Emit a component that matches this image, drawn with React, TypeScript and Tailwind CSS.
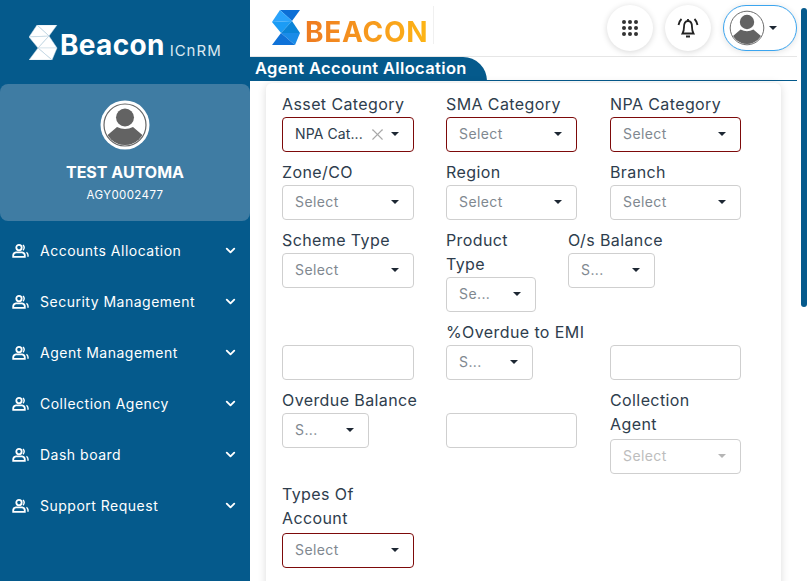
import { ChevronDown, X } from 'lucide-react';

const menu = ['Accounts Allocation', 'Security Management', 'Agent Management', 'Collection Agency', 'Dash board', 'Support Request'];

const Avatar = ({ size, id }: { size: number; id: string }) => (
  <svg width={size} height={size} viewBox="0 0 50 50">
    <circle cx="25" cy="25" r="24.5" fill="#fff" />
    <circle cx="25" cy="25" r="21" fill="#fff" stroke="#666" strokeWidth="1.2" />
    <clipPath id={id}>
      <circle cx="25" cy="25" r="20" />
    </clipPath>
    <g clipPath={`url(#${id})`} fill="#636363">
      <circle cx="25" cy="17.5" r="9" />
      <path d="M4 38 L17 27 Q25 31 33 27 L46 38 L46 50 L4 50 Z" />
    </g>
  </svg>
);

const PeopleIcon = () => (
  <svg width="17" height="14" viewBox="0 0 17 14" fill="none" stroke="#fff" strokeWidth="1.8">
    <circle cx="7" cy="3.6" r="2.7" />
    <path d="M1.2 12.8 V11.4 Q1.2 8.8 4 8.4 H10 Q12.8 8.8 12.8 11.4 V12.8 Z" />
    <path d="M11 1 Q13.4 3.6 11 6.2" strokeWidth="1.4" />
    <path d="M16 12.8 V11 Q15.8 9 14.4 8.4" strokeWidth="1.4" />
  </svg>
);

const LogoMark = ({ white }: { white?: boolean }) => {
  const c = white
    ? ['#fff', '#fff', '#fff', '#fff', '#fff', '#fff']
    : ['#0c6fd6', '#2aa3fb', '#1b9cf5', '#0a84d8', '#1a8ce8', '#0f72d8'];
  const s = white ? '#c3d6e3' : 'none';
  return (
    <svg width="29" height="35" viewBox="0 0 29 35">
      <g stroke={s} strokeWidth="0.5">
        <polygon points="8,0 28,0 20,11" fill={c[0]} />
        <polygon points="8,0 20,11 0,12" fill={c[1]} />
        <polygon points="0,12 20,11 9,23" fill={c[2]} />
        <polygon points="20,11 28,23 9,23" fill={c[3]} />
        <polygon points="9,23 28,23 23,35" fill={c[4]} />
        <polygon points="9,23 23,35 0,35" fill={c[5]} />
      </g>
    </svg>
  );
};

const Label = ({ children, className = '' }: { children: React.ReactNode; className?: string }) => (
  <label className={`block -translate-y-px text-[16px] leading-6 text-[#2e3d4d] tracking-[0.4px] ${className}`}>{children}</label>
);

const Select = ({
  width = 'w-[132px]',
  text = 'Select',
  error,
  disabled,
  value,
  className = '',
}: {
  width?: string;
  text?: string;
  error?: boolean;
  disabled?: boolean;
  value?: boolean;
  className?: string;
}) => (
  <div
    className={`${width} h-[35px] rounded-[4px] border bg-white flex items-center pl-[12px] pr-[14px] text-[14px] ${
      error ? 'border-[#7d0a0a]' : 'border-[#cfcfcf]'
    } ${className}`}
  >
    <span className={`flex-1 -mt-[2px] ${disabled ? 'text-[#bdbdbd] tracking-[0.4px]' : value ? 'text-[#2e3d4d] tracking-[0.1px]' : 'text-[#808890] tracking-[0.4px]'}`}>{text}</span>
    {value && <X size={19} strokeWidth={1.4} className="text-[#a8a8a8] mr-[4px]" />}
    <span className={`w-0 h-0 -mt-px border-x-[4px] border-x-transparent border-t-[4px] ${disabled ? 'border-t-[#b5b5b5]' : 'border-t-[#1d2733]'}`} />
  </div>
);

const Input = ({ width = 'w-[132px]' }: { width?: string }) => (
  <div className={`${width} h-[35px] rounded-[4px] border border-[#cfcfcf] bg-white`} />
);

export default function App() {
  return (
    <div className="w-[811px] h-[581px] overflow-hidden relative flex bg-white font-['Inter',sans-serif]">
      {/* Sidebar */}
      <aside className="w-[250px] h-full shrink-0 bg-[#055a8c] text-white">
        <div className="h-[84px] flex items-start pt-[25px] pl-[29px]">
          <LogoMark white />
          <span className="text-[28px] leading-[36px] font-bold ml-[2px] mt-[2px] tracking-[0.3px]">Beacon</span>
          <span className="text-[15px] leading-[36px] ml-[5px] mt-[8px] tracking-[1px] text-[#dce9f1]">ICnRM</span>
        </div>
        <div className="h-[137px] rounded-[8px] bg-[#3f7ca3] flex flex-col items-center pt-[16px]">
          <Avatar size={50} id="av-side" />
          <div className="mt-[10px] text-[16px] leading-6 font-bold">TEST AUTOMA</div>
          <div className="mt-[3px] text-[11.5px] leading-4 tracking-[0.4px]">AGY0002477</div>
        </div>
        <nav className="mt-[4px]">
          {menu.map((item) => (
            <div key={item} className="h-[51px] flex items-center pl-[12px] pr-[12px]">
              <PeopleIcon />
              <span className="flex-1 ml-[11px] text-[14px] tracking-[0.5px]">{item}</span>
              <ChevronDown size={15} strokeWidth={3} />
            </div>
          ))}
        </nav>
      </aside>

      {/* Main */}
      <main className="w-[547px] shrink-0">
        <header className="h-[57px] border-b border-[#e6e6e6] flex items-start pt-[5px]">
          <div className="ml-[22px] mt-[1px] pr-[5px] h-[38px] flex items-start border-r border-[#f0f0f0]">
            <div className="mt-[4px]">
              <LogoMark />
            </div>
            <span className="ml-[4px] mt-[12px] text-[28px] leading-[28px] font-bold tracking-[0.75px] bg-gradient-to-r from-[#ee7a21] to-[#fdb515] bg-clip-text text-transparent">BEACON</span>
          </div>
          <div className="ml-auto flex items-center gap-[12px]">
            <div className="w-[46px] h-[46px] rounded-full bg-white shadow-[0_1px_6px_rgba(0,0,0,0.16)] flex items-center justify-center">
              <svg width="16" height="16" viewBox="0 0 16 16" fill="#333">
                {[2, 8, 14].flatMap((y) => [2, 8, 14].map((x) => <circle key={`${x}-${y}`} cx={x} cy={y} r="2" />))}
              </svg>
            </div>
            <div className="w-[46px] h-[46px] rounded-full bg-white shadow-[0_1px_6px_rgba(0,0,0,0.16)] flex items-center justify-center">
              <svg width="24" height="24" viewBox="0 0 24 24" fill="none" stroke="#222" strokeWidth="1.8">
                <path d="M6.5 17.5 Q8 15 8 11 Q8 5 12 5 Q16 5 16 11 Q16 15 17.5 17.5 Z" />
                <path d="M2.5 9 Q3 5.5 5.5 3" />
                <path d="M21.5 9 Q21 5.5 18.5 3" />
                <path d="M10 20.5 H14" strokeWidth="2" />
                <path d="M12 3 V5" />
              </svg>
            </div>
            <div className="w-[74px] h-[46px] rounded-[23px] border border-[#3ba5ef] bg-white shadow-[0_1px_6px_rgba(0,0,0,0.12)] flex items-center pl-[3px]">
              <Avatar size={40} id="av-top" />
              <span className="ml-[2px] w-0 h-0 border-x-[4px] border-x-transparent border-t-[4px] border-t-[#1d2733]" />
            </div>
          </div>
        </header>

        <div className="h-[24px] border-b border-[#055a8c] w-[547px]">
          <div className="w-[237px] h-[24px] bg-[#055a8c] rounded-tr-[24px] text-white text-[16.5px] leading-[22px] font-semibold pl-[5px] tracking-[0.35px]">
            Agent Account Allocation
          </div>
        </div>

        {/* Form card */}
        <div className="ml-[16px] w-[515px] h-[520px] mt-[2px] rounded-[6px] bg-white shadow-[0_1px_8px_rgba(0,0,0,0.14)] pt-[10px] pl-[16px]">
          <div className="flex h-[68px]">
            <div className="w-[164px]">
              <Label>Asset Category</Label>
              <Select error value text="NPA Cat..." />
            </div>
            <div className="w-[164px]">
              <Label>SMA Category</Label>
              <Select error width="w-[131px]" />
            </div>
            <div>
              <Label>NPA Category</Label>
              <Select error width="w-[131px]" />
            </div>
          </div>
          <div className="flex h-[68px]">
            <div className="w-[164px]">
              <Label>Zone/CO</Label>
              <Select />
            </div>
            <div className="w-[164px]">
              <Label>Region</Label>
              <Select width="w-[131px]" />
            </div>
            <div>
              <Label>Branch</Label>
              <Select width="w-[131px]" />
            </div>
          </div>
          <div className="flex h-[92px]">
            <div className="w-[164px]">
              <Label>Scheme Type</Label>
              <Select />
            </div>
            <div className="w-[122px]">
              <Label className="w-[90px]">Product Type</Label>
              <Select width="w-[90px]" text="Se..." />
            </div>
            <div>
              <Label>O/s Balance</Label>
              <Select width="w-[87px]" text="S..." />
            </div>
          </div>
          <div className="flex h-[68px] items-start">
            <div className="w-[164px] pt-[24px]">
              <Input />
            </div>
            <div className="w-[164px]">
              <Label>%Overdue to EMI</Label>
              <Select width="w-[87px]" text="S..." />
            </div>
            <div className="pt-[24px]">
              <Input width="w-[131px]" />
            </div>
          </div>
          <div className="flex h-[94px]">
            <div className="w-[164px]">
              <Label>Overdue Balance</Label>
              <Select width="w-[87px]" text="S..." />
            </div>
            <div className="w-[164px] pt-[24px]">
              <Input width="w-[131px]" />
            </div>
            <div className="w-[131px]">
              <Label className="w-[90px]">Collection Agent</Label>
              <Select disabled width="w-[131px]" className="mt-[2px]" />
            </div>
          </div>
          <div>
            <Label className="w-[110px]">Types Of Account</Label>
            <Select error className="mt-[2px]" />
          </div>
        </div>
      </main>

      {/* Scrollbar */}
      <div className="absolute right-[4px] top-[8px] w-[6px] h-[299px] rounded-[3px] bg-[#055a8c]" />
    </div>
  );
}
